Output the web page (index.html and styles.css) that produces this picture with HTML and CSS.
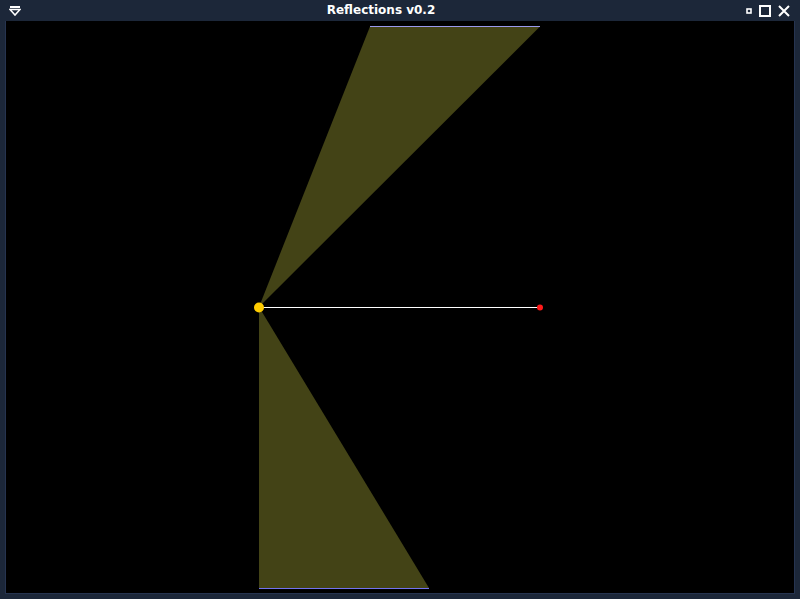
FILE: index.html
```html
<!DOCTYPE html>
<html>
<head>
<meta charset="utf-8">
<title>Reflections v0.2</title>
<link rel="stylesheet" href="styles.css">
</head>
<body>
<div class="window">
  <div class="titlebar">
    <div class="tb-left">
      <svg class="icon" width="12" height="10" viewBox="0 0 12 10">
        <rect x="1" y="0" width="10" height="2" fill="#fff"/>
        <path d="M1 3.5 H11 L6 9 Z" fill="none" stroke="#fff" stroke-width="1.6" stroke-linejoin="miter"/>
      </svg>
    </div>
    <div class="title">Reflections v0.2</div>
    <div class="tb-right">
      <svg class="icon" width="6" height="6" viewBox="0 0 6 6"><rect x="1" y="1" width="4" height="4" fill="none" stroke="#fff" stroke-width="1.6"/></svg>
      <svg class="icon" width="12" height="12" viewBox="0 0 12 12"><rect x="1" y="1" width="10" height="10" fill="none" stroke="#fff" stroke-width="2"/></svg>
      <svg class="icon" width="12" height="12" viewBox="0 0 12 12"><path d="M1 1 L11 11 M11 1 L1 11" stroke="#fff" stroke-width="2"/></svg>
    </div>
  </div>
  <div class="body">
    <div class="canvas">
      <svg width="788" height="572" viewBox="0 0 788 572">
        <polygon points="253,286 364,5.5 534,5.5" fill="#434316"/>
        <polygon points="253,286 253,567 423,567" fill="#434316"/>
        <line x1="364" y1="5.5" x2="534" y2="5.5" stroke="#9a9aee" stroke-width="1"/>
        <line x1="253" y1="567.5" x2="423" y2="567.5" stroke="#7272f0" stroke-width="1"/>
        <line x1="253" y1="286.5" x2="534" y2="286.5" stroke="#ffffff" stroke-width="1"/>
        <circle cx="534" cy="286.5" r="3" fill="#ff1a1a"/>
        <circle cx="253" cy="286.5" r="5" fill="#ffcc00"/>
      </svg>
    </div>
  </div>
</div>
</body>
</html>
```

FILE: styles.css
```css
html, body {
  margin: 0;
  padding: 0;
  background: #000;
}
.window {
  width: 800px;
  height: 599px;
  display: flex;
  flex-direction: column;
  background: #1c2739;
  overflow: hidden;
}
.titlebar {
  height: 21px;
  display: flex;
  align-items: center;
  background: #1c2739;
}
.tb-left {
  padding-left: 9px;
  display: flex;
  align-items: center;
}
.title {
  flex: 1;
  text-align: center;
  color: #fff;
  font-family: "DejaVu Sans", sans-serif;
  font-weight: bold;
  font-size: 12px;
  line-height: 21px;
  margin-right: 5px;
}
.tb-right {
  display: flex;
  align-items: center;
  gap: 7px;
  padding-right: 10px;
}
.icon {
  display: block;
}
.body {
  flex: 1;
  padding: 0 5px 5px 5px;
  display: flex;
}
.canvas {
  border: 1px solid #263450;
  border-top: none;
  background: #000;
  width: 788px;
  height: 572px;
}
.canvas svg {
  display: block;
}
```
